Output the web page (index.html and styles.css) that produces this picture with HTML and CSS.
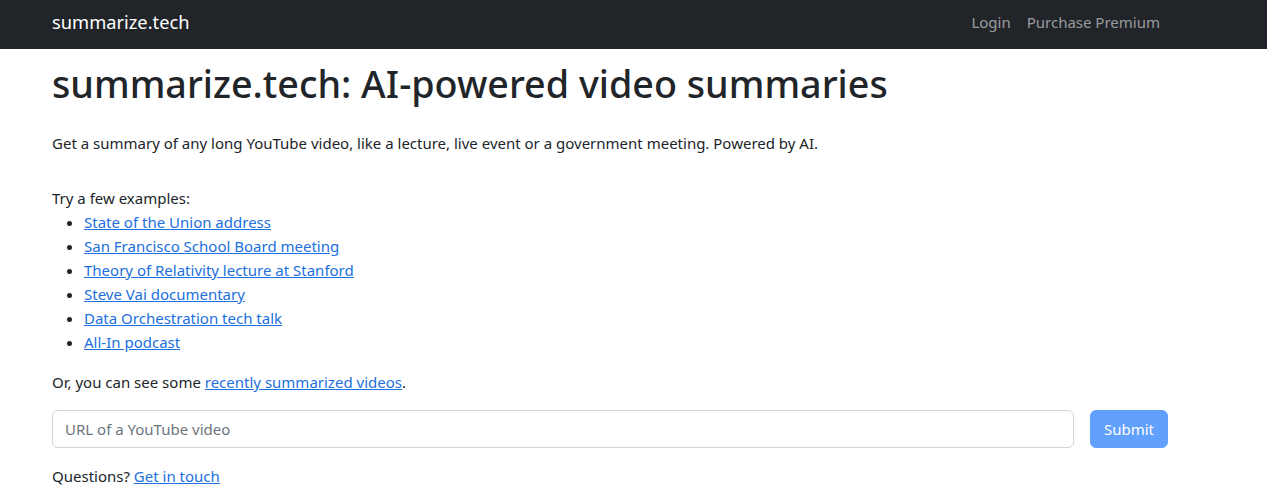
FILE: index.html
```html
<!DOCTYPE html>
<html lang="en">
<head>
    <meta charset="UTF-8">
    <meta name="viewport" content="width=device-width, initial-scale=1.0">
    <title>summarize.tech: AI-powered video summaries</title>
    <link rel="stylesheet" href="styles.css">
</head>
<body>
    <nav class="navbar">
        <div class="container navbar-inner">
            <a class="brand" href="#">summarize.tech</a>
            <ul class="nav-links">
                <li><a href="#">Login</a></li>
                <li><a href="#">Purchase Premium</a></li>
            </ul>
        </div>
    </nav>

    <main class="container">
        <h1>summarize.tech: AI-powered video summaries</h1>
        <p class="lead-text">Get a summary of any long YouTube video, like a lecture, live event or a government meeting. Powered by AI.</p>

        <div class="examples">
            Try a few examples:
            <ul>
                <li><a href="#">State of the Union address</a></li>
                <li><a href="#">San Francisco School Board meeting</a></li>
                <li><a href="#">Theory of Relativity lecture at Stanford</a></li>
                <li><a href="#">Steve Vai documentary</a></li>
                <li><a href="#">Data Orchestration tech talk</a></li>
                <li><a href="#">All-In podcast</a></li>
            </ul>
        </div>

        <p class="recent">Or, you can see some <a href="#">recently summarized videos</a>.</p>

        <form class="url-form">
            <input type="text" placeholder="URL of a YouTube video">
            <button type="submit" disabled>Submit</button>
        </form>

        <p class="contact">Questions? <a href="#">Get in touch</a></p>
    </main>
</body>
</html>
```

FILE: styles.css
```css
body {
    margin: 0;
    font-family: 'Noto Sans', sans-serif;
    font-size: 15px;
    line-height: 24px;
    color: #212529;
    background: #fff;
}

a {
    color: #2170de;
}

.container {
    width: 1116px;
    padding: 0 52px;
}

.navbar {
    background-color: #212529;
    height: 49px;
}

.navbar-inner {
    display: flex;
    justify-content: space-between;
    align-items: center;
    height: 43px;
}

.brand {
    color: #fff;
    font-size: 18.3px;
    text-decoration: none;
}

.nav-links {
    list-style: none;
    margin: 0;
    padding: 0;
    display: flex;
}

.nav-links a {
    display: block;
    padding: 0 8px;
    color: rgba(255, 255, 255, 0.55);
    text-decoration: none;
}

h1 {
    font-size: 37.7px;
    font-weight: 500;
    line-height: 48px;
    margin: 11px 0 23px;
}

.lead-text {
    margin: 0 0 31px;
}

.examples ul {
    margin: 0 0 16px;
    padding-left: 32px;
}

.recent {
    margin: 0 0 16px;
}

.url-form {
    display: flex;
    gap: 16px;
    margin-bottom: 16px;
}

.url-form input {
    flex: 1;
    height: 38px;
    box-sizing: border-box;
    padding: 6px 12px;
    font: inherit;
    color: #212529;
    border: 1px solid #ced4da;
    border-radius: 6px;
}

.url-form input::placeholder {
    color: #6c757d;
}

.url-form button {
    height: 38px;
    padding: 6px 13px;
    font: inherit;
    color: #fff;
    background-color: #0d6efd;
    border: 1px solid #0d6efd;
    border-radius: 6px;
    opacity: 0.65;
}

.contact {
    margin: 0;
}
```
